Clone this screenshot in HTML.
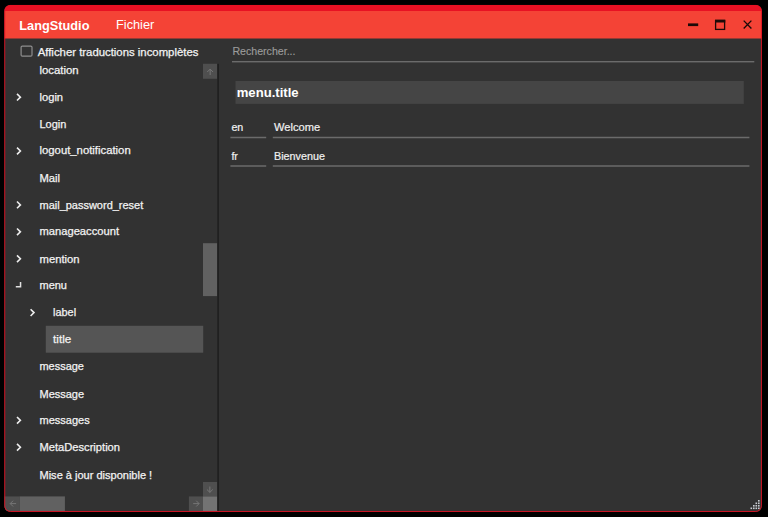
<!DOCTYPE html>
<html lang="fr">
<head>
<meta charset="utf-8">
<title>LangStudio</title>
<style>
*{box-sizing:border-box;margin:0;padding:0}
html,body{width:768px;height:517px;background:#000;overflow:hidden}
body{font-family:"Liberation Sans",sans-serif;font-size:12px;color:#f0f0f0;position:relative}
#shapes{position:absolute;left:0;top:0}
.t{position:absolute;white-space:nowrap;transform-origin:0 0;line-height:20px;height:20px}
</style>
</head>
<body>
<svg id="shapes" width="768" height="517" viewBox="0 0 768 517">
<defs><clipPath id="wc"><rect x="4.30" y="5.00" width="757.55" height="506.90" rx="6" ry="6"/></clipPath></defs>
<g clip-path="url(#wc)">
<rect x="4.30" y="5.00" width="757.55" height="506.90" fill="#323232"/>
<rect x="4.30" y="11.00" width="757.55" height="27.50" fill="#f44336"/>
<rect x="4.30" y="5.00" width="757.55" height="6.00" fill="#e81123"/>
<rect x="688.00" y="23.40" width="10.20" height="2.70" fill="#1c0a08"/>
<rect x="715.600" y="20.800" width="9" height="8.600" fill="none" stroke="#1c0a08" stroke-width="1.300"/>
<rect x="715.00" y="19.60" width="10.30" height="2.90" fill="#1c0a08"/>
<path d="M743.700 20.600 L751.400 28.500 M751.400 20.600 L743.700 28.500" stroke="#1c0a08" stroke-width="1.350" fill="none"/>
<rect x="21.100" y="46.050" width="10.900" height="10.050" rx="1.200" fill="none" stroke="#8e8e8e" stroke-width="1.200"/>
<rect x="45.80" y="325.80" width="157.40" height="26.90" fill="#555555"/>
<rect x="203.00" y="63.80" width="14.30" height="15.00" fill="#4f4f4f"/>
<path transform="translate(210.15 72.00) rotate(90)" d="M-2.900 0 H3 M0 -2.900 L-2.900 0 L0 2.900" fill="none" stroke="#767676" stroke-width="1"/>
<rect x="203.00" y="243.20" width="14.30" height="52.90" fill="#616161"/>
<rect x="203.00" y="482.00" width="14.30" height="14.30" fill="#4f4f4f"/>
<path transform="translate(209.85 489.50) rotate(270)" d="M-2.900 0 H3 M0 -2.900 L-2.900 0 L0 2.900" fill="none" stroke="#767676" stroke-width="1"/>
<rect x="4.30" y="496.40" width="15.40" height="14.60" fill="#4f4f4f"/>
<path transform="translate(13.10 503.60) rotate(0)" d="M-2.900 0 H3 M0 -2.900 L-2.900 0 L0 2.900" fill="none" stroke="#767676" stroke-width="1"/>
<rect x="19.70" y="496.40" width="45.20" height="14.60" fill="#616161"/>
<rect x="188.90" y="496.40" width="14.10" height="14.60" fill="#4f4f4f"/>
<path transform="translate(196.20 503.60) rotate(180)" d="M-2.900 0 H3 M0 -2.900 L-2.900 0 L0 2.900" fill="none" stroke="#767676" stroke-width="1"/>
<rect x="203.00" y="496.40" width="14.30" height="14.60" fill="#737373"/>
<rect x="217.30" y="63.80" width="1.60" height="448.10" fill="#1e1e1e"/>
<rect x="232.00" y="61.00" width="522.30" height="1.40" fill="#6b6b6b"/>
<rect x="235.50" y="81.00" width="508.30" height="22.85" fill="#454545"/>
<rect x="230.40" y="136.75" width="35.80" height="1.50" fill="#6b6b6b"/>
<rect x="272.80" y="136.75" width="476.60" height="1.50" fill="#6b6b6b"/>
<rect x="230.40" y="165.25" width="35.80" height="1.50" fill="#6b6b6b"/>
<rect x="272.80" y="165.25" width="476.60" height="1.50" fill="#6b6b6b"/>
<rect x="758.00" y="500.00" width="1.60" height="1.60" fill="#c9ccd2"/>
<rect x="755.50" y="502.50" width="1.60" height="1.60" fill="#c9ccd2"/>
<rect x="758.00" y="502.50" width="1.60" height="1.60" fill="#c9ccd2"/>
<rect x="753.00" y="505.00" width="1.60" height="1.60" fill="#c9ccd2"/>
<rect x="755.50" y="505.00" width="1.60" height="1.60" fill="#c9ccd2"/>
<rect x="758.00" y="505.00" width="1.60" height="1.60" fill="#c9ccd2"/>
<rect x="750.50" y="507.50" width="1.60" height="1.60" fill="#c9ccd2"/>
<rect x="753.00" y="507.50" width="1.60" height="1.60" fill="#c9ccd2"/>
<rect x="755.50" y="507.50" width="1.60" height="1.60" fill="#c9ccd2"/>
<rect x="758.00" y="507.50" width="1.60" height="1.60" fill="#c9ccd2"/>
<path d="M17.00 93.83 L20.40 97.18 L17.00 100.53" fill="none" stroke="#ececec" stroke-width="1.600"/>
<path d="M17.00 147.69 L20.40 151.04 L17.00 154.39" fill="none" stroke="#ececec" stroke-width="1.600"/>
<path d="M17.00 201.55 L20.40 204.90 L17.00 208.25" fill="none" stroke="#ececec" stroke-width="1.600"/>
<path d="M17.00 228.48 L20.40 231.83 L17.00 235.18" fill="none" stroke="#ececec" stroke-width="1.600"/>
<path d="M17.00 255.41 L20.40 258.76 L17.00 262.11" fill="none" stroke="#ececec" stroke-width="1.600"/>
<path d="M15.80 286.74 L20.55 286.74 L20.55 282.09" fill="none" stroke="#e0e0e0" stroke-width="1.500"/>
<path d="M30.60 309.27 L34.00 312.62 L30.60 315.97" fill="none" stroke="#ececec" stroke-width="1.600"/>
<path d="M17.00 416.99 L20.40 420.34 L17.00 423.69" fill="none" stroke="#ececec" stroke-width="1.600"/>
<path d="M17.00 443.92 L20.40 447.27 L17.00 450.62" fill="none" stroke="#ececec" stroke-width="1.600"/>
</g>
<rect x="4.74" y="5.44" width="756.67" height="506.02" rx="5.6" ry="5.6" fill="none" stroke="#e81123" stroke-width="0.88"/>
</svg>
<div class="t" style="left:0;top:16px;font-size:13px;color:#fff;transform:translateX(19.30px) scaleX(0.9813);font-weight:bold;">LangStudio</div>
<div class="t" style="left:0;top:15px;font-size:13px;color:#fff;transform:translateX(116.00px) scaleX(0.9816);">Fichier</div>
<div class="t" style="left:0;top:42px;font-size:10.7px;color:#f2f2f2;transform:translateX(37.70px) scaleX(1.0622);-webkit-text-stroke:0.25px #f2f2f2;">Afficher traductions incomplètes</div>
<div class="t" style="left:0;top:60px;font-size:10.7px;color:#f2f2f2;transform:translateX(39.50px) scaleX(1.0625);-webkit-text-stroke:0.25px #f2f2f2;">location</div>
<div class="t" style="left:0;top:87px;font-size:10.7px;color:#f2f2f2;transform:translateX(39.50px) scaleX(1.0437);-webkit-text-stroke:0.25px #f2f2f2;">login</div>
<div class="t" style="left:0;top:114px;font-size:10.7px;color:#f2f2f2;transform:translateX(39.50px) scaleX(1.0270);-webkit-text-stroke:0.25px #f2f2f2;">Login</div>
<div class="t" style="left:0;top:140px;font-size:10.7px;color:#f2f2f2;transform:translateX(39.50px) scaleX(1.0583);-webkit-text-stroke:0.25px #f2f2f2;">logout_notification</div>
<div class="t" style="left:0;top:168px;font-size:10.7px;color:#f2f2f2;transform:translateX(39.50px) scaleX(1.0494);-webkit-text-stroke:0.25px #f2f2f2;">Mail</div>
<div class="t" style="left:0;top:195px;font-size:10.7px;color:#f2f2f2;transform:translateX(39.50px) scaleX(1.0276);-webkit-text-stroke:0.25px #f2f2f2;">mail_password_reset</div>
<div class="t" style="left:0;top:221px;font-size:10.7px;color:#f2f2f2;transform:translateX(39.50px) scaleX(1.0453);-webkit-text-stroke:0.25px #f2f2f2;">manageaccount</div>
<div class="t" style="left:0;top:249px;font-size:10.7px;color:#f2f2f2;transform:translateX(39.50px) scaleX(1.0531);-webkit-text-stroke:0.25px #f2f2f2;">mention</div>
<div class="t" style="left:0;top:275px;font-size:10.7px;color:#f2f2f2;transform:translateX(39.50px) scaleX(1.0270);-webkit-text-stroke:0.25px #f2f2f2;">menu</div>
<div class="t" style="left:0;top:302px;font-size:10.7px;color:#f2f2f2;transform:translateX(53.10px) scaleX(1.0172);-webkit-text-stroke:0.25px #f2f2f2;">label</div>
<div class="t" style="left:0;top:329px;font-size:10.7px;color:#f2f2f2;transform:translateX(53.10px) scaleX(1.0922);-webkit-text-stroke:0.25px #f2f2f2;">title</div>
<div class="t" style="left:0;top:356px;font-size:10.7px;color:#f2f2f2;transform:translateX(39.50px) scaleX(1.0247);-webkit-text-stroke:0.25px #f2f2f2;">message</div>
<div class="t" style="left:0;top:384px;font-size:10.7px;color:#f2f2f2;transform:translateX(39.50px) scaleX(1.0270);-webkit-text-stroke:0.25px #f2f2f2;">Message</div>
<div class="t" style="left:0;top:410px;font-size:10.7px;color:#f2f2f2;transform:translateX(39.50px) scaleX(1.0292);-webkit-text-stroke:0.25px #f2f2f2;">messages</div>
<div class="t" style="left:0;top:437px;font-size:10.7px;color:#f2f2f2;transform:translateX(39.50px) scaleX(1.0426);-webkit-text-stroke:0.25px #f2f2f2;">MetaDescription</div>
<div class="t" style="left:0;top:465px;font-size:10.7px;color:#f2f2f2;transform:translateX(39.50px) scaleX(1.0307);-webkit-text-stroke:0.25px #f2f2f2;">Mise à jour disponible !</div>
<div class="t" style="left:0;top:41px;font-size:11px;color:#9b9b9b;transform:translateX(232.40px) scaleX(0.9644);-webkit-text-stroke:0.15px #9b9b9b;">Rechercher...</div>
<div class="t" style="left:0;top:83px;font-size:13.5px;color:#fff;transform:translateX(236.70px) scaleX(0.9707);font-weight:bold;">menu.title</div>
<div class="t" style="left:0;top:117px;font-size:10.7px;color:#f0f0f0;transform:translateX(231.40px) scaleX(1.0000);-webkit-text-stroke:0.2px #f0f0f0;">en</div>
<div class="t" style="left:0;top:117px;font-size:10.7px;color:#f0f0f0;transform:translateX(274.00px) scaleX(1.0404);-webkit-text-stroke:0.2px #f0f0f0;">Welcome</div>
<div class="t" style="left:0;top:146px;font-size:10.7px;color:#f0f0f0;transform:translateX(231.40px) scaleX(1.0000);-webkit-text-stroke:0.2px #f0f0f0;">fr</div>
<div class="t" style="left:0;top:146px;font-size:10.7px;color:#f0f0f0;transform:translateX(274.00px) scaleX(1.0083);-webkit-text-stroke:0.2px #f0f0f0;">Bienvenue</div>
</body>
</html>
